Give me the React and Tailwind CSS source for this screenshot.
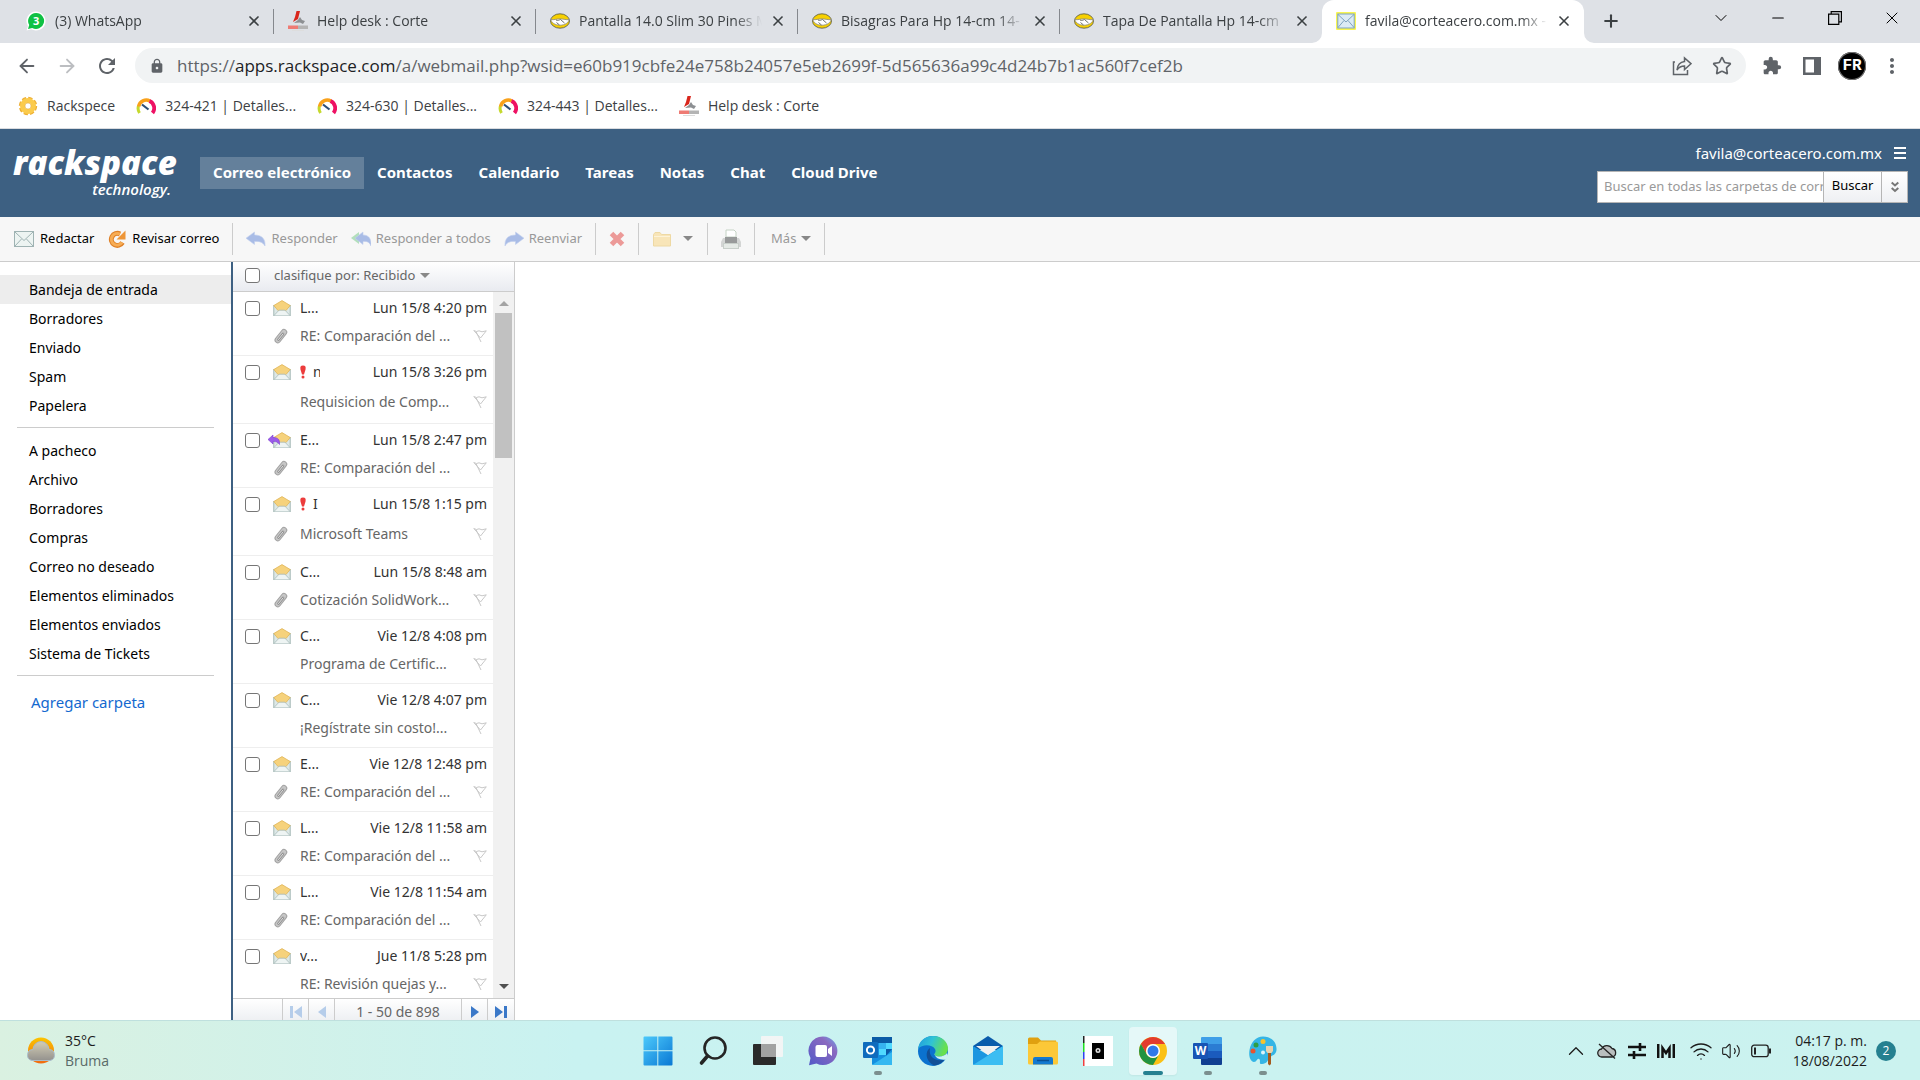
import React, { useState } from 'react'
import { ArrowLeft, ArrowRight, Star, Plus, X, ChevronDown, ChevronUp, Minus, Wifi, Volume2 } from 'lucide-react'
import { MdLock, MdExtension, MdMoreVert, MdRefresh } from 'react-icons/md'

const TABS = [
  { title: '(3) WhatsApp', icon: 'whatsapp' },
  { title: 'Help desk : Corte', icon: 'corte' },
  { title: 'Pantalla 14.0 Slim 30 Pines M', icon: 'meli' },
  { title: 'Bisagras Para Hp 14-cm 14-', icon: 'meli' },
  { title: 'Tapa De Pantalla Hp 14-cm', icon: 'meli' },
  { title: 'favila@corteacero.com.mx -', icon: 'mail', active: true },
]

const BOOKMARKS = [
  { title: 'Rackspece', icon: 'gear' },
  { title: '324-421 | Detalles...', icon: 'gauge' },
  { title: '324-630 | Detalles...', icon: 'gauge' },
  { title: '324-443 | Detalles...', icon: 'gauge' },
  { title: 'Help desk : Corte', icon: 'corte' },
]

const NAV = ['Correo electrónico', 'Contactos', 'Calendario', 'Tareas', 'Notas', 'Chat', 'Cloud Drive']

const FOLDERS = ['Bandeja de entrada', 'Borradores', 'Enviado', 'Spam', 'Papelera']

const CUSTOM_FOLDERS = [
  'A pacheco',
  'Archivo',
  'Borradores',
  'Compras',
  'Correo no deseado',
  'Elementos eliminados',
  'Elementos enviados',
  'Sistema de Tickets',
]

const MAILS = [
  { from: 'L...', date: 'Lun 15/8 4:20 pm', subject: 'RE: Comparación del ...', clip: true },
  { from: 'n', date: 'Lun 15/8 3:26 pm', subject: 'Requisicion de Comp...', important: true },
  { from: 'E...', date: 'Lun 15/8 2:47 pm', subject: 'RE: Comparación del ...', clip: true, replied: true },
  { from: 'I', date: 'Lun 15/8 1:15 pm', subject: 'Microsoft Teams', clip: true, important: true },
  { from: 'C...', date: 'Lun 15/8 8:48 am', subject: 'Cotización SolidWork...', clip: true },
  { from: 'C...', date: 'Vie 12/8 4:08 pm', subject: 'Programa de Certific...' },
  { from: 'C...', date: 'Vie 12/8 4:07 pm', subject: '¡Regístrate sin costo!...' },
  { from: 'E...', date: 'Vie 12/8 12:48 pm', subject: 'RE: Comparación del ...', clip: true },
  { from: 'L...', date: 'Vie 12/8 11:58 am', subject: 'RE: Comparación del ...', clip: true },
  { from: 'L...', date: 'Vie 12/8 11:54 am', subject: 'RE: Comparación del ...', clip: true },
  { from: 'v...', date: 'Jue 11/8 5:28 pm', subject: 'RE: Revisión quejas y...' },
]

/* Favicons */

function SiteIcon({ name }) {
  if (name === 'whatsapp') {
    return (
      <svg viewBox="0 0 20 20" className="size-5 shrink-0">
        <path d="M10 .5a9.5 9.5 0 1 1-4.6 17.8L.6 19.6l1.3-4.7A9.5 9.5 0 0 1 10 .5z" fill="#fff" />
        <path d="M10.2 2a8 8 0 1 1-4 15L2 18l1.2-4A8 8 0 0 1 10.2 2z" fill="#0fc144" />
        <text x="10.2" y="14" fontSize="11" fontWeight="700" textAnchor="middle" fill="#fff" fontFamily="Open Sans">3</text>
      </svg>
    )
  }
  if (name === 'corte') {
    return (
      <svg viewBox="0 0 20 20" className="size-5 shrink-0">
        <path d="M8.5 0H12L10 8l-5 3 2-5z" fill="#d9261c" />
        <path d="M12 6l2 3 3 1-2 3-3-1.5-6 .5 4-3z" fill="#8d9093" />
        <rect y="14.5" width="10" height="3.5" fill="#ee7b74" />
        <rect x="10" y="14.5" width="10" height="3.5" fill="#b4b4b4" />
        <rect x="4" y="19" width="12" height="1" fill="#ddd" />
      </svg>
    )
  }
  if (name === 'meli') {
    return (
      <svg viewBox="0 0 20 20" className="size-5 shrink-0">
        <ellipse cx="10" cy="10" rx="9.5" ry="7.2" fill="#f7d000" stroke="#54553f" strokeWidth=".8" />
        <path d="M1 8.5c3 .8 5-.8 9-.6 4-.2 6 1.4 9 .6-.2 3-4 5.7-9 5.7S1.2 11.5 1 8.500z" fill="#fff" stroke="#8b8c86" strokeWidth=".8" />
        <path d="M6 9c2 1 3 0 4.5-.5l4 3.5M6.5 11.5l3 2.5" fill="none" stroke="#6f706a" strokeWidth="1" />
      </svg>
    )
  }
  if (name === 'gear') {
    return (
      <svg viewBox="0 0 20 20" className="size-5 shrink-0">
        <circle cx="10" cy="10" r="7.2" fill="none" stroke="#eeb035" strokeWidth="4" strokeDasharray="3.8 1.855" />
        <circle cx="10" cy="10" r="5.5" fill="none" stroke="#fbcb4c" strokeWidth="5" />
        <circle cx="10" cy="10" r="3" fill="#fff" stroke="#e2b04a" strokeWidth=".6" />
      </svg>
    )
  }
  if (name === 'gauge') {
    return (
      <svg viewBox="0 0 20 20" className="size-5 shrink-0" fill="none" strokeWidth="3">
        <path d="M3.5 17A8 8 0 0 1 2.5 10" stroke="#c5d92d" />
        <path d="M2.6 10.5A7.8 7.8 0 0 1 14 5" stroke="#f9a11b" strokeWidth="3.5" />
        <path d="M13.5 5a7.8 7.8 0 0 1 3 12" stroke="#ee1164" strokeWidth="3.8" />
        <path d="M6 8.5l6.5 5" stroke="#2d4d78" strokeWidth="2.2" />
      </svg>
    )
  }
  return (
    <svg viewBox="0 0 20 20" className="size-5 shrink-0">
      <rect y="1" width="20" height="18" rx="1" fill="#f8f552" />
      <rect x="1.8" y="3" width="16.4" height="14" fill="#dcebf5" stroke="#7fa3bf" />
      <path d="M2 3.500l8 7.500 8-7.500M2 16.500l6-7M18 16.500l-6-7" fill="none" stroke="#7fa3bf" />
    </svg>
  )
}

/* Webmail icons */

function EnvelopeOpen() {
  return (
    <svg viewBox="0 0 18 16" className="h-4 w-[18px]">
      <rect x=".8" y="5.5" width="16.4" height="10" fill="#dde8e7" stroke="#a3b7b4" />
      <path d="M.8 5.5L9 .6l8.2 4.900-4.200 5H5z" fill="#f6d27c" stroke="#dfb557" strokeWidth=".8" />
      <path d="M1 15.5L6 10.2h6l5 5.300" fill="#eef4f3" stroke="#a9bdbb" strokeWidth=".8" />
    </svg>
  )
}

function Compose() {
  return (
    <svg viewBox="0 0 20 16" className="h-4 w-5">
      <rect x=".5" y=".5" width="19" height="15" fill="#edf4f2" stroke="#9fb3b3" />
      <path d="M1 1l9 8.5L19 1M1 15l6.5-7M19 15l-6.5-7" fill="none" stroke="#9fb3b3" />
    </svg>
  )
}

function Refresh() {
  return (
    <svg viewBox="0 0 18 18" className="size-[18px]" fill="none">
      <path d="M14.500 12.500A6 6 0 1 1 12 4" stroke="#df8128" strokeWidth="5" />
      <path d="M14 12.500A5.800 5.800 0 1 1 12 4.200" stroke="#f7ad55" strokeWidth="3" />
      <path d="M17.500.5v9H8.500z" fill="#ee9637" />
    </svg>
  )
}

function Reply({ all = false, forward = false }) {
  return (
    <svg viewBox="0 0 20 16" className={`h-4 w-5 ${forward ? '-scale-x-100' : ''}`}>
      {all && <path d="M8 1v12L0 7z" fill="#b3dfbc" />}
      <path
        d={all ? 'M12 1v3c6 0 8.500 4 8 11-1.500-4-4-5-8-4.500V13.500L4 7.200z' : 'M8.500 1v3C16 4 19.500 8 19 15c-2-4-6-5-10.500-4.500v3L0 7.200z'}
        fill="#a9bce6"
        stroke="#c2d0ee"
        strokeWidth=".6"
      />
    </svg>
  )
}

function Caret({ className = '' }) {
  return (
    <svg viewBox="0 0 10 6" className={`h-[5px] w-[10px] ${className}`} preserveAspectRatio="none">
      <path d="M0 0h10L5 6z" fill="currentColor" />
    </svg>
  )
}

function Folder() {
  return (
    <svg viewBox="0 0 18 16" className="h-4 w-[18px]">
      <path d="M.5 15V3.500L2 1.500h5l1.500 2h9V15z" fill="#f8e5b8" stroke="#eed9a4" />
      <path d="M1 5.500h16" stroke="#fdf3d8" />
    </svg>
  )
}

function Printer() {
  return (
    <svg viewBox="0 0 20 20" className="size-5">
      <path d="M5 8V1h8l2 2v5z" fill="#fff" stroke="#c4d2c4" />
      <path d="M2 9h16l2 4v5H0v-5z" fill="#d3d5d4" />
      <rect x="4" y="8" width="12" height="6" fill="#989a9a" />
      <rect x="2.500" y="14.500" width="15" height="5" fill="#e5eae6" stroke="#c8cfca" />
    </svg>
  )
}

function Paperclip() {
  return (
    <svg viewBox="0 0 14 16" className="h-4 w-[14px]" fill="none" strokeLinecap="round">
      <path d="M3.800 12L10 4.200" stroke="#a3a3a3" strokeWidth="6.500" />
      <path d="M3.800 12L10 4.200" stroke="#c6c6c6" strokeWidth="4.500" />
      <path d="M4.500 11.500L9 6" stroke="#8f8f8f" strokeWidth="2.600" />
      <path d="M4.500 11.500L9 6" stroke="#e0e0e0" strokeWidth="1" />
    </svg>
  )
}

function Flag() {
  return (
    <svg viewBox="0 0 14 14" className="size-[14px]">
      <path d="M.8 1.500l2.700 1 2.500-.7 3 1 4.300-1L7.500 9zM3 2.500l5 10.500" fill="#fff" stroke="#c8c8c8" />
    </svg>
  )
}

/* Taskbar icons */

function AppIcon({ name }) {
  const cls = 'size-[30px]'
  switch (name) {
    case 'Inicio':
      return (
        <svg viewBox="0 0 30 30" className={cls}>
          <defs>
            <linearGradient id="win" x1="0" y1="0" x2="1" y2="1" gradientUnits="objectBoundingBox">
              <stop offset="0" stopColor="#4cc9fb" />
              <stop offset="1" stopColor="#0a78d4" />
            </linearGradient>
          </defs>
          <path d="M.5 1.500a1 1 0 0 1 1-1h12.800v13.800H.5zM15.300.5h13.200a1 1 0 0 1 1 1v12.800H15.300zM.5 15.300h13.800v14.200H1.500a1 1 0 0 1-1-1zM15.300 15.300h14.200v13.200a1 1 0 0 1-1 1H15.300z" fill="url(#win)" />
        </svg>
      )
    case 'Buscar':
      return (
        <svg viewBox="0 0 30 30" className={cls} fill="none" stroke="#252525">
          <circle cx="17" cy="12" r="10.500" strokeWidth="2.600" />
          <path d="M9.500 20L3.500 27" strokeWidth="3.600" strokeLinecap="round" />
        </svg>
      )
    case 'Vista de tareas':
      return (
        <svg viewBox="0 0 30 30" className={cls}>
          <rect y="8" width="23" height="21" rx="1" fill="#2a2a2a" />
          <rect x="8" width="22" height="21" rx="1" fill="#f4f4f4" opacity=".95" />
          <path d="M8 8h15v13H8z" fill="#a2a2a2" />
        </svg>
      )
    case 'Chat':
      return (
        <svg viewBox="0 0 30 30" className={cls}>
          <defs>
            <linearGradient id="chat" x1="1" y1="0" x2="0" y2="1">
              <stop offset="0" stopColor="#6ea8ec" />
              <stop offset=".3" stopColor="#8a69c0" />
              <stop offset="1" stopColor="#5258c8" />
            </linearGradient>
          </defs>
          <path d="M15 .5a14.300 14.300 0 1 1-6.500 27L1 29.300l1.500-7.300A14.300 14.300 0 0 1 15 .5z" fill="url(#chat)" />
          <rect x="7.500" y="9" width="11.500" height="12" rx="2" fill="#fff" />
          <path d="M20 13l4-3v10l-4-3z" fill="#fff" />
        </svg>
      )
    case 'Outlook':
      return (
        <svg viewBox="0 0 30 30" className={cls}>
          <rect x="9" y="1" width="20" height="28" rx="1" fill="#1490df" />
          <path d="M9 1h20v6H9z" fill="#0a5ba6" />
          <path d="M16 7h7v6h-7z" fill="#36b3f0" />
          <path d="M23 7h6v6h-6zM16 13h7v6h-7z" fill="#50d9ff" />
          <path d="M23 13h6l-6 7z" fill="#0b5aa8" />
          <path d="M9 29l20-13v13z" fill="#35b8f1" />
          <rect x="0" y="6" width="15" height="16" rx="1" fill="#0f6cbd" />
          <circle cx="7.500" cy="14" r="3.600" fill="none" stroke="#fff" strokeWidth="2" />
        </svg>
      )
    case 'Edge':
      return (
        <svg viewBox="0 0 30 30" className={cls}>
          <defs>
            <linearGradient id="edge" x1="0" y1="0" x2="1" y2=".3">
              <stop offset="0" stopColor="#1f9bde" />
              <stop offset=".5" stopColor="#30c3d5" />
              <stop offset="1" stopColor="#68e04e" />
            </linearGradient>
          </defs>
          <circle cx="15" cy="15" r="15" fill="#0b72cf" />
          <path d="M0 13C1 5 7 0 15 0c9 0 15 6 15 12.500 0 5-4 8-8.500 8-4 0-5.500-1.500-5-2.700 1-1.500 1.500-3 .5-4.800C14 8 4 8 0 13z" fill="url(#edge)" />
          <path d="M12 12c-5 3-5 13 4 17.500 5-.5 9-3.500 11-6.500-8 3.500-17-1-15-11z" fill="#124f96" />
          <path d="M16.500 17.800c-.5 1.200 1 2.700 5 2.700 3 0 6-1.300 7.500-3.500L30 20l-2 3.500c-5 1-11-1-11.500-5.700z" fill="#cdf2f1" />
        </svg>
      )
    case 'Correo':
      return (
        <svg viewBox="0 0 30 30" className={cls}>
          <path d="M0 10L15 0l15 10v4H0z" fill="#0a5bab" />
          <path d="M0 10l15 9L30 10v18a1 1 0 0 1-1 1H1a1 1 0 0 1-1-1z" fill="#1c96e0" />
          <path d="M0 29L30 10v18a1 1 0 0 1-1 1z" fill="#3cbdf2" />
          <path d="M3 10h24l-12 9z" fill="#f1f1f1" />
        </svg>
      )
    case 'Explorador':
      return (
        <svg viewBox="0 0 30 30" className={cls}>
          <path d="M0 3a1.500 1.500 0 0 1 1.500-1.500H10l3 3H28V10H0z" fill="#e0a010" />
          <path d="M0 8h9l3-2.500h16.500A1.500 1.500 0 0 1 30 7v20a1.500 1.500 0 0 1-1.500 1.500h-27A1.500 1.500 0 0 1 0 27z" fill="#fcc838" />
          <path d="M5 28.500V23a2 2 0 0 1 2-2h16a2 2 0 0 1 2 2v5.500z" fill="#1379d0" />
          <path d="M9 24.500h12" stroke="#0a4f93" strokeWidth="1.500" />
        </svg>
      )
    case 'Editor':
      return (
        <svg viewBox="0 0 30 30" className={cls}>
          <rect width="30" height="30" fill="#fff" />
          <path d="M0 0h1.500v7H0z" fill="#222" />
          <path d="M0 7h1.500v9H0z" fill="#1fe01f" />
          <path d="M0 16h1.500v7H0z" fill="#3040f0" />
          <path d="M0 23h1.500v7H0z" fill="#f04040" />
          <rect x="9" y="7" width="12" height="16" fill="#000" />
          <circle cx="15" cy="14.500" r="2.500" fill="#ddd" />
          <circle cx="15" cy="14.500" r="1" fill="#111" />
        </svg>
      )
    case 'Chrome':
      return (
        <svg viewBox="0 0 30 30" className={cls}>
          <circle cx="15" cy="15" r="14" fill="#fbc116" />
          <path d="M2.900 8A14 14 0 0 1 27.100 8H15a7 7 0 0 0-6.100 10.500z" fill="#e33b2e" />
          <path d="M2.900 8A14 14 0 0 0 15 29l6-10.500a7 7 0 0 1-12.100 0z" fill="#229342" />
          <circle cx="15" cy="15" r="7" fill="#fff" />
          <circle cx="15" cy="15" r="5.500" fill="#2f78ea" />
        </svg>
      )
    case 'Word':
      return (
        <svg viewBox="0 0 30 30" className={cls}>
          <path d="M8 2a1 1 0 0 1 1-1h19a1 1 0 0 1 1 1v6H8z" fill="#3f9fe8" />
          <path d="M8 8h21v7H8z" fill="#2b7cd3" />
          <path d="M8 15h21v7H8z" fill="#1b5bbd" />
          <path d="M8 22h21v6a1 1 0 0 1-1 1H9a1 1 0 0 1-1-1z" fill="#103f91" />
          <rect y="7" width="15" height="16" rx="1" fill="#1854b4" />
          <text x="7.500" y="19" fontSize="12" fontWeight="700" textAnchor="middle" fill="#fff" fontFamily="Open Sans">W</text>
        </svg>
      )
    default:
      return (
        <svg viewBox="0 0 30 30" className={cls}>
          <path d="M15 .5C24 .5 29 7 28.500 14c-.5 6-6 5-8 9-1 3-3 5-8 5-1.500-1 .5-4-1.500-5s-2 3-5 3C2 25 .5 20 1.500 14 3 6 8 .5 15 .5z" fill="#35b5e5" />
          <circle cx="15" cy="16.500" r="2" fill="#d9f4fb" />
          <circle cx="8" cy="9" r="2.500" fill="#2f9e44" />
          <circle cx="15" cy="5.500" r="2.500" fill="#f6c32c" />
          <circle cx="5" cy="15" r="2.500" fill="#e8542f" />
          <path d="M18 10h7v5l-1.500 2h-4L18 15z" fill="#e7d3b0" />
          <path d="M20 17h3v11l-1.500 1.500L20 28z" fill="#a35a1e" />
        </svg>
      )
  }
}

const APPS = [
  { name: 'Inicio' },
  { name: 'Buscar' },
  { name: 'Vista de tareas' },
  { name: 'Chat' },
  { name: 'Outlook', open: true },
  { name: 'Edge' },
  { name: 'Correo' },
  { name: 'Explorador' },
  { name: 'Editor' },
  { name: 'Chrome', active: true },
  { name: 'Word', open: true },
  { name: 'Paint', open: true },
]

function TabStrip() {
  return (
    <div className="flex h-[43px] shrink-0 bg-[#dee1e6] pl-3 text-[#3c4043]">
      {TABS.map((tab, i) => (
        <div
          key={i}
          className={`relative flex w-[262px] items-center pr-3 pb-[2px] pl-[14px] ${tab.active ? 'rounded-t-xl bg-white' : ''}`}
        >
          {tab.active && (
            <>
              <svg viewBox="0 0 10 10" className="absolute bottom-0 -left-[10px] size-[10px]">
                <path d="M10 0v10H0A10 10 0 0 0 10 0z" fill="#fff" />
              </svg>
              <svg viewBox="0 0 10 10" className="absolute -right-[10px] bottom-0 size-[10px]">
                <path d="M0 0v10h10A10 10 0 0 1 0 0z" fill="#fff" />
              </svg>
            </>
          )}
          <SiteIcon name={tab.icon} />
          <button className="ml-[9px] min-w-0 flex-1 overflow-hidden mask-r-from-85% text-left text-sm whitespace-nowrap">
            {tab.title}
          </button>
          <button aria-label="Cerrar pestaña" className="ml-2">
            <X className="size-4" strokeWidth={2.5} />
          </button>
          {i < TABS.length - 2 && <span className="absolute top-[9px] right-0 h-[25px] w-px bg-[#85888d]" />}
        </div>
      ))}
      <button aria-label="Nueva pestaña" className="ml-[17px] pb-[2px]">
        <Plus className="size-5" strokeWidth={2.5} />
      </button>
      <div className="ml-auto flex h-9 items-center text-black">
        <button aria-label="Buscar pestañas" className="flex w-[57px] justify-center">
          <ChevronDown className="size-5" strokeWidth={1.2} />
        </button>
        <button aria-label="Minimizar" className="flex w-[57px] justify-center">
          <Minus className="size-[18px]" strokeWidth={1.5} />
        </button>
        <button aria-label="Restaurar" className="flex w-[57px] justify-center">
          <svg viewBox="0 0 14 14" className="size-[14px]" fill="none" stroke="currentColor" strokeWidth="1.2">
            <path d="M.6 3.200h10.200v10.200H.6zM3.200 3V.6h10.200v10.200H11" />
          </svg>
        </button>
        <button aria-label="Cerrar" className="flex w-[57px] justify-center">
          <X className="size-5" strokeWidth={1.2} />
        </button>
      </div>
    </div>
  )
}

function AddressBar() {
  return (
    <div className="flex h-[45px] shrink-0 items-center bg-white pr-4 pl-4 text-[#5f6368]">
      <button aria-label="Atrás">
        <ArrowLeft className="size-[22px]" strokeWidth={2} />
      </button>
      <button aria-label="Adelante" className="ml-[18px] text-[#bcbec1]">
        <ArrowRight className="size-[22px]" strokeWidth={2} />
      </button>
      <button aria-label="Recargar" className="ml-[17px]">
        <MdRefresh className="size-6" />
      </button>
      <div className="ml-4 flex h-[35px] flex-1 items-center rounded-full bg-[#f1f3f4] pr-[14px] pl-[14px]">
        <MdLock className="size-4" />
        <div className="ml-3 flex-1 overflow-hidden text-[17px] leading-6 whitespace-nowrap">
          https://<span className="text-[#202124]">apps.rackspace.com</span>
          /a/webmail.php?wsid=e60b919cbfe24e758b24057e5eb2699f-5d565636a99c4d24b7b1ac560f7cef2b
        </div>
        <button aria-label="Compartir">
          <svg viewBox="0 0 20 20" className="size-5" fill="none" stroke="currentColor" strokeWidth="1.5">
            <path d="M3 6H1.500v12.500h14V14" />
            <path d="M12.500 2v3.500C8 6 5.500 9 5 14c2-3 4-4 7.500-4v3.500L19 7.700z" />
          </svg>
        </button>
        <button aria-label="Favoritos" className="ml-5">
          <Star className="size-5" />
        </button>
      </div>
      <button aria-label="Extensiones" className="ml-4">
        <MdExtension className="size-5" />
      </button>
      <button aria-label="Panel lateral" className="ml-5">
        <svg viewBox="0 0 20 20" className="size-5">
          <path d="M1 1h18v18H1zM3.500 3.500v13H12v-13z" fill="currentColor" fillRule="evenodd" />
        </svg>
      </button>
      <button aria-label="Perfil" className="ml-4 flex size-7 items-center justify-center rounded-full bg-black font-['Liberation_Mono',monospace] text-base font-bold text-white ring-1 ring-[#777] ring-inset">
        FR
      </button>
      <button aria-label="Menú" className="ml-[14px]">
        <MdMoreVert className="size-6" />
      </button>
    </div>
  )
}

function BookmarksBar() {
  return (
    <div className="flex h-[41px] shrink-0 items-center gap-[21px] border-b border-[#dadce0] bg-white pb-1 pl-[18px] text-sm text-[#3c4043]">
      {BOOKMARKS.map((b) => (
        <a key={b.title} href="#" className="flex items-center gap-[9px]">
          <SiteIcon name={b.icon} />
          {b.title}
        </a>
      ))}
    </div>
  )
}

function MailHeader() {
  return (
    <header className="flex h-[88px] shrink-0 items-center justify-between bg-[#3d6082] pr-3 pl-[13px] text-white">
      <div className="flex items-center">
        <a href="#" className="w-[162px] pb-1 font-['Open_Sans',sans-serif] italic">
          <div className="text-[33px] leading-9 font-extrabold">rackspace</div>
          <div className="pr-1 text-right text-[15px] leading-4 font-semibold">technology.</div>
        </a>
        <nav className="ml-[25px] flex text-[15px] font-bold">
          {NAV.map((item, i) => (
            <a key={item} href="#" className={`flex h-8 items-center px-[13px] pb-px ${i === 0 ? 'bg-[#64809b]' : ''}`}>
              {item}
            </a>
          ))}
        </nav>
      </div>
      <div className="flex flex-col items-end gap-2">
        <div className="flex items-center gap-3 text-[15px] leading-5">
          favila@corteacero.com.mx
          <button aria-label="Menú de cuenta" className="mr-[2px] flex flex-col gap-[3px]">
            <span className="h-[2px] w-3 bg-white" />
            <span className="h-[2px] w-3 bg-white" />
            <span className="h-[2px] w-3 bg-white" />
          </button>
        </div>
        <form className="flex h-8 border border-[#b5b5b5] bg-white text-[13px] text-black" onSubmit={(e) => e.preventDefault()}>
          <input
            aria-label="Buscar"
            placeholder="Buscar en todas las carpetas de correo"
            className="w-[225px] pl-[6px] outline-none placeholder:text-[#999]"
          />
          <button className="w-[58px] border-l border-[#b5b5b5] bg-linear-to-b from-white to-[#eef0f3] pb-[2px]">Buscar</button>
          <button aria-label="Opciones de búsqueda" className="flex w-[26px] items-center justify-center border-l border-[#b5b5b5] bg-linear-to-b from-white to-[#eef0f3]">
            <svg viewBox="0 0 8 12" className="h-3 w-2" fill="none" stroke="#777" strokeWidth="2">
              <path d="M.7 1.500L4 4.500l3.300-3M.7 7L4 10l3.300-3" />
            </svg>
          </button>
        </form>
      </div>
    </header>
  )
}

function Divider() {
  return <span className="h-8 w-px bg-[#ccc]" />
}

function Toolbar() {
  return (
    <div className="flex h-[45px] shrink-0 items-center border-b border-[#ccc] bg-[#f7f7f7] pb-px pl-[14px] text-[13px] text-[#999]">
      <button className="flex items-center gap-[6px] text-black">
        <Compose />
        Redactar
      </button>
      <button className="mr-[13px] ml-[14px] flex items-center gap-[6px] text-black">
        <Refresh />
        Revisar correo
      </button>
      <Divider />
      <button className="ml-[13px] flex items-center gap-[5px]">
        <Reply />
        Responder
      </button>
      <button className="ml-[13px] flex items-center gap-[5px]">
        <Reply all />
        Responder a todos
      </button>
      <button className="mr-[13px] ml-[13px] flex items-center gap-[5px]">
        <Reply forward />
        Reenviar
      </button>
      <Divider />
      <button aria-label="Eliminar" className="mx-[13px]">
        <svg viewBox="0 0 16 16" className="size-4">
          <path d="M2.500 2.500l11 11M13.500 2.500l-11 11" stroke="#ec9a98" strokeWidth="5" />
        </svg>
      </button>
      <Divider />
      <button aria-label="Mover a carpeta" className="mr-[14px] ml-[14px] flex items-center gap-3 text-[#888]">
        <Folder />
        <Caret />
      </button>
      <Divider />
      <button aria-label="Imprimir" className="mx-[13px]">
        <Printer />
      </button>
      <Divider />
      <button className="mr-[13px] ml-4 flex items-center gap-[5px]">
        Más
        <Caret className="text-[#888]" />
      </button>
      <Divider />
    </div>
  )
}

function Sidebar({ selected, onSelect }) {
  const renderFolder = (name, key) => (
    <li key={key}>
      <a
        href="#"
        onClick={() => onSelect(key)}
        className={`flex h-[29px] items-center pl-[29px] ${selected === key ? 'bg-[#ededed]' : ''}`}
      >
        {name}
      </a>
    </li>
  )

  return (
    <aside className="w-[231px] shrink-0 bg-white pt-[13px] text-sm text-black">
      <ul>{FOLDERS.map((name, i) => renderFolder(name, `f${i}`))}</ul>
      <hr className="mt-[7px] mr-[17px] mb-2 ml-[17px] border-[#ccc]" />
      <ul>{CUSTOM_FOLDERS.map((name, i) => renderFolder(name, `c${i}`))}</ul>
      <hr className="mt-[7px] mr-[17px] mb-4 ml-[17px] border-[#ccc]" />
      <a href="#" className="ml-[31px] text-[15px] leading-5 text-[#1469cf]">
        Agregar carpeta
      </a>
    </aside>
  )
}

function Checkbox({ label }) {
  return (
    <input
      type="checkbox"
      aria-label={label}
      className="size-[15px] shrink-0 appearance-none rounded-[3px] border border-[#767676] bg-white checked:bg-[#3d6082]"
    />
  )
}

function MailRow({ mail }) {
  return (
    <li className={`shrink-0 border-b border-[#eee] bg-white pr-[6px] pl-3 ${mail.important ? 'h-[68px]' : 'h-16'}`}>
      <div className="flex h-8 items-center">
        <Checkbox label={mail.subject} />
        <span className="relative ml-[13px]">
          <EnvelopeOpen />
          {mail.replied && (
            <svg viewBox="0 0 12 12" className="absolute top-[2px] -left-[5px] size-3">
              <path d="M5 1v2.500c5 0 7 2 6.500 7C10 8 8 7.500 5 7.500V10L0 5.500z" fill="#9a5bea" stroke="#7d40d0" strokeWidth=".6" />
            </svg>
          )}
        </span>
        <span className="ml-[9px] flex w-5 items-center overflow-hidden text-sm whitespace-nowrap text-[#333]">
          {mail.important && (
            <svg viewBox="0 0 6 14" className="mr-[7px] h-[14px] w-[6px] shrink-0">
              <path d="M3 .5c2.500 0 3 1.500 2.500 4L4 9.500H2L.5 4.500C0 2 .5.500 3 .5z" fill="#ec3c3c" />
              <circle cx="3" cy="12" r="1.500" fill="#ec3c3c" />
            </svg>
          )}
          {mail.from}
        </span>
        <span className="ml-auto text-sm text-[#333]">{mail.date}</span>
      </div>
      <div className={`flex h-6 items-center ${mail.important ? 'mt-[2px]' : ''}`}>
        <span className="mr-3 ml-[29px] w-[14px]">{mail.clip && <Paperclip />}</span>
        <span className="flex-1 text-sm whitespace-nowrap text-[#666]">{mail.subject}</span>
        <button aria-label="Marcar">
          <Flag />
        </button>
      </div>
    </li>
  )
}

function PageArrow({ last, flip, dim }) {
  return (
    <svg
      viewBox="0 0 12 14"
      className={`h-[14px] w-3 ${flip ? '-scale-x-100' : ''} ${dim ? 'text-[#b5cdea]' : 'text-[#3a78c8]'}`}
    >
      <path d={last ? 'M0 1v12l8-6zM9 1h3v12H9z' : 'M2 1v12l8-6z'} fill="currentColor" />
    </svg>
  )
}

function MailList() {
  return (
    <section className="flex w-[284px] shrink-0 flex-col border-r border-l-2 border-r-[#ccc] border-l-[#3d6082]">
      <div className="flex h-[30px] shrink-0 items-center border-b border-[#ccc] bg-linear-to-b from-white to-[#e9ebf0] pb-[2px] pl-3 text-[13px] text-[#666]">
        <Checkbox label="Seleccionar todo" />
        <button className="ml-[14px] flex items-center gap-[5px]">
          clasifique por: Recibido
          <Caret className="text-[#888]" />
        </button>
      </div>
      <div className="flex min-h-0 flex-1">
        <ul className="flex flex-1 flex-col overflow-hidden">
          {MAILS.map((mail, i) => (
            <MailRow key={i} mail={mail} />
          ))}
        </ul>
        <div className="flex w-[21px] flex-col items-center bg-[#f1f1f1] py-[9px]">
          <Caret className="rotate-180 text-[#a3a3a3]" />
          <div className="mt-[7px] h-[145px] w-[17px] bg-[#c1c1c1]" />
          <Caret className="mt-auto text-[#505050]" />
        </div>
      </div>
      <div className="flex h-[22px] shrink-0 divide-x divide-[#ccc] border-t border-[#ccc] bg-linear-to-b from-white to-[#eef0f3] text-sm text-[#666]">
        <span className="w-[50px]" />
        <button aria-label="Primera página" className="flex w-[26px] items-center justify-center pt-1">
          <PageArrow last flip dim />
        </button>
        <button aria-label="Página anterior" className="flex w-[26px] items-center justify-center pt-1">
          <PageArrow flip dim />
        </button>
        <span className="flex flex-1 items-center justify-center pt-1">1 - 50 de 898</span>
        <button aria-label="Página siguiente" className="flex w-[26px] items-center justify-center pt-1">
          <PageArrow />
        </button>
        <button aria-label="Última página" className="flex w-[26px] items-center justify-center pt-1">
          <PageArrow last />
        </button>
      </div>
    </section>
  )
}

function Taskbar() {
  return (
    <footer className="grid h-[60px] shrink-0 grid-cols-[1fr_auto_1fr] items-center border-t border-[#bfe0de] bg-linear-to-r from-[#daf1e1] via-[#c9f2f1] via-30% to-[#cbf2ef] text-sm leading-5 text-[#1c1c1c]">
      <button className="flex items-center gap-[9px] pl-[26px] text-left">
        <svg viewBox="0 0 30 28" className="h-7 w-[30px]">
          <defs>
            <linearGradient id="sun" x1="0" y1="0" x2="0" y2="1">
              <stop offset="0" stopColor="#fbc400" />
              <stop offset="1" stopColor="#f06a10" />
            </linearGradient>
            <linearGradient id="haze" x1="0" y1="0" x2="0" y2="1">
              <stop offset="0" stopColor="#d3cdb4" />
              <stop offset="1" stopColor="#94928e" />
            </linearGradient>
          </defs>
          <circle cx="15" cy="13.500" r="13" fill="url(#sun)" />
          <path d="M6 23.500a5.500 5.500 0 0 1 1-10.900 8 8 0 0 1 16 0 5.500 5.500 0 0 1 1 10.900z" fill="url(#haze)" stroke="#a9bccb" strokeWidth="1" />
        </svg>
        <span>
          35°C
          <br />
          <span className="text-[#5a6a68]">Bruma</span>
        </span>
      </button>
      <div className="flex gap-[7px]">
        {APPS.map((app) => (
          <button
            key={app.name}
            aria-label={app.name}
            className={`relative flex size-12 items-center justify-center rounded ${app.active ? 'bg-[#e5f8f8] shadow-xs' : ''}`}
          >
            <AppIcon name={app.name} />
            {app.open && <span className="absolute bottom-0 h-1 w-2 rounded-full bg-[#7b8f8e]" />}
            {app.active && <span className="absolute bottom-0 h-1 w-5 rounded-full bg-[#258090]" />}
          </button>
        ))}
      </div>
      <div className="flex items-center justify-end pr-6">
        <ChevronUp className="size-[26px]" strokeWidth={1.2} />
        <svg viewBox="0 0 20 16" className="ml-2 h-4 w-5" fill="#b9bebe" stroke="#222" strokeWidth="1.3">
          <path d="M5 14a4 4 0 0 1-.5-8A6 6 0 0 1 15 5.500 4.300 4.300 0 0 1 15 14z" />
          <path d="M2 1l16 14.500" />
        </svg>
        <svg viewBox="0 0 18 16" className="ml-[11px] h-4 w-[18px]" stroke="#111" strokeWidth="2.600">
          <path d="M0 4h18M0 12h18M12 0v8M6 8v8" />
        </svg>
        <svg viewBox="0 0 18 14" className="ml-[11px] h-[14px] w-[18px]" fill="none" stroke="#111" strokeWidth="2.500">
          <path d="M1.200 0v14M16.800 0v14M5.500 14V4l3.500 5 3.500-5v10" />
        </svg>
        <Wifi className="ml-[14px] size-6" strokeWidth={1.3} />
        <Volume2 className="ml-2 size-5" strokeWidth={1.3} />
        <svg viewBox="0 0 20 14" className="ml-[10px] h-[14px] w-5">
          <rect x=".7" y="1.200" width="16.500" height="11.500" rx="2.500" fill="none" stroke="#222" strokeWidth="1.300" />
          <rect x="3" y="3.500" width="2" height="7" fill="#222" />
          <path d="M18 4.500h2v5h-2z" fill="#222" />
        </svg>
        <div className="ml-[22px] text-right">
          04:17 p. m.
          <br />
          18/08/2022
        </div>
        <span className="ml-[9px] flex size-5 items-center justify-center rounded-full bg-[#258090] text-xs text-white">2</span>
      </div>
    </footer>
  )
}

export default function App() {
  const [selected, setSelected] = useState('f0')

  return (
    <div className="flex h-screen flex-col overflow-hidden bg-white font-['Open_Sans',sans-serif]">
      <TabStrip />
      <AddressBar />
      <BookmarksBar />
      <div className="flex min-h-0 flex-1 flex-col font-['Noto_Sans','DejaVu_Sans',sans-serif]">
        <MailHeader />
        <Toolbar />
        <main className="flex min-h-0 flex-1">
          <Sidebar selected={selected} onSelect={setSelected} />
          <MailList />
          <div className="flex-1 bg-white" />
        </main>
      </div>
      <Taskbar />
    </div>
  )
}
